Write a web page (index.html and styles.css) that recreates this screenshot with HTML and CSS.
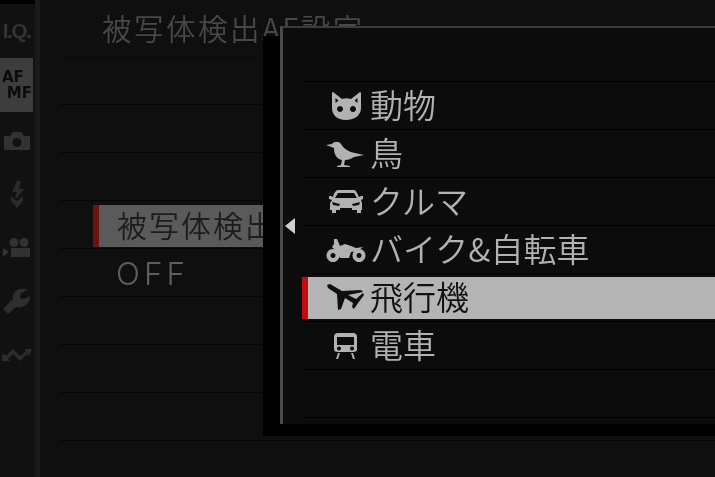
FILE: index.html
```html
<!DOCTYPE html>
<html lang="ja">
<head>
<meta charset="utf-8">
<title>被写体検出AF設定</title>
<link rel="stylesheet" href="styles.css">
</head>
<body>
<div class="screen">
  <aside class="side">
    <div class="side-top"></div>
    <div class="tab tab-iq">I.Q.</div>
    <div class="tab tab-af"><span class="af">AF</span><span class="mf">MF</span></div>
    <div class="tab tab-ic">
      <svg class="s-ic" viewBox="0 0 28 20"><path fill-rule="evenodd" d="M1 5h6l3-4h8l3 4h6v14H1zM14 7a4.500 4.500 0 1 0 .01 0z"/></svg>
    </div>
    <div class="tab tab-ic">
      <svg class="s-ic s-flash" viewBox="0 0 16 27"><path d="M8 0h4L10 8h5L8 17H6l2-6H3z"/><path d="M2 15l6 5 6-5v5l-6 7-6-7z"/></svg>
    </div>
    <div class="tab tab-ic">
      <svg class="s-ic" viewBox="0 0 28 20"><circle cx="11" cy="4.500" r="4.500"/><circle cx="21" cy="4.500" r="4.500"/><path d="M8 10h19v9H8zM0 10l6 4-6 5z"/></svg>
    </div>
    <div class="tab tab-ic">
      <svg class="s-ic s-wrench" viewBox="0 0 27 25"><path d="M0 20L10 10C9 4 14-1 22 0l3 1-7 3-1 5 4 1 6-3c0 8-7 13-14 11L5 25z"/></svg>
    </div>
    <div class="tab tab-ic">
      <svg class="s-ic s-wave" viewBox="0 0 30 12"><path d="M0 5v7h8L6 10l5-5 7 7 7-7 2 2 3-7h-8l2 2-6 5-7-7-6 6z"/></svg>
    </div>
  </aside>
  <div class="stripe"></div>
  <main class="panel">
    <h1 class="title">被写体検出AF設定</h1>
    <div class="row"></div>
    <div class="row"></div>
    <div class="row"></div>
    <div class="row"><div class="sel-bar">被写体検出</div></div>
    <div class="row row-off">OFF</div>
    <div class="row"></div>
    <div class="row"></div>
    <div class="row"></div>
    <div class="row"></div>
  </main>
  <div class="popup">
    <div class="popup-inner">
      <div class="p-row"></div>
      <div class="p-row">
        <svg class="p-ic" viewBox="0 0 38 31"><path fill-rule="evenodd" d="M6 2l9 7c3-1 6-1 9 0l9-7c1 0 1 1 1 2v14c0 7-6 12-15 12S5 25 5 18V4c0-1 0-2 1-2zM8.500 8v5l3-2.500zM30.500 8l-3 2.500 3 2.500zM13 16a3 3 0 1 0 .01 0zM26 16a3 3 0 1 0 .01 0z"/></svg>
        <span>動物</span>
      </div>
      <div class="p-row">
        <svg class="p-ic" viewBox="0 0 38 31"><path d="M-1 7l6-1c2-3 7-3 9 0 3 5 8 8 14 9l9 2-10 2c-3 2-6 3-9 3l-1 5 6 1v1H10v-1l4-1 1-5c-5-1-8-5-8-12z"/></svg>
        <span>鳥</span>
      </div>
      <div class="p-row">
        <svg class="p-ic" viewBox="0 0 38 31"><path fill-rule="evenodd" d="M11 4h16c2 0 3 3 5 7l2-1h2v3l-2 1 1 3v7h-1v3h-4v-3H9v3H5v-3H3v-7l2-3-3-1v-3h2l2 1c1-4 3-7 5-7zM11 7L8 12h22l-3-5zM5 16l1 3 6 1 1-2zM33 16l-8 2 1 2 6-1zM13 22v2h12v-2z"/></svg>
        <span>クルマ</span>
      </div>
      <div class="p-row">
        <svg class="p-ic" viewBox="0 0 38 31"><path d="M7 5h3l3 7 5-2 6 2 5 2 7-1-5 4-7 1-2 6h-9l-3-6-5-5 2-3z"/><path fill-rule="evenodd" d="M6 15a6.500 6.500 0 1 1-.01 0zM6 19a2.500 2.500 0 1 0 .01 0zM32 15a6.500 6.500 0 1 1-.01 0zM32 19a2.500 2.500 0 1 0 .01 0z"/></svg>
        <span>バイク&amp;自転車</span>
      </div>
      <div class="p-row p-row-sel">
        <div class="p-sel">
          <svg class="p-ic" viewBox="0 0 38 31"><path d="M0 3l3-1 12 7 19-1 2 2-15 3 8 4 7-6 1 2-6 8-4 6-2-2 1-4-8-5-4 11-3 1-1-16-9-6z"/></svg>
          <span>飛行機</span>
        </div>
      </div>
      <div class="p-row">
        <svg class="p-ic" viewBox="0 0 38 31"><path fill-rule="evenodd" d="M11 3h15c3 0 4 2 4 4v12c0 2-1 3-4 3H11c-3 0-4-1-4-3V7c0-2 1-4 4-4zM10 7v8h17V7zM12 16.500a2 2 0 1 0 .01 0zM25 16.500a2 2 0 1 0 .01 0zM11 23h2l-2 6H9zM24 23h2l2 6h-2z"/></svg>
        <span>電車</span>
      </div>
      <div class="p-row"></div>
    </div>
    <span class="arrow"></span>
  </div>
</div>
</body>
</html>
```
FILE: styles.css
```css
html, body { margin: 0; padding: 0; background: #0f0f0f; }
.screen {
  width: 715px; height: 477px; position: relative; overflow: hidden;
  display: flex; background: #0f0f0f; filter: blur(.45px);
  font-family: "Noto Sans CJK JP", "Liberation Sans", sans-serif;
}
.side { width: 35px; flex: none; background: #111; display: flex; flex-direction: column; }
.side-top { height: 4px; width: 35px; background: #000; }
.tab { width: 33px; display: flex; align-items: center; justify-content: center; }
.tab-iq {
  height: 54px;
  font: 700 21px "Liberation Sans", sans-serif; letter-spacing: -1.6px; color: #343434;
}
.tab-af {
  height: 54px; margin-bottom: 2px; background: #3d3d3d; flex-direction: column; align-items: stretch;
  font: 700 15px/16px "DejaVu Sans", sans-serif; color: #0c0c0c;
}
.af { padding-left: 2px; }
.mf { align-self: flex-end; padding-right: 1px; }
.tab-ic { height: 53.5px; }
.s-ic { width: 28px; height: 20px; fill: #323232; overflow: visible; }
.s-flash { width: 16px; height: 27px; fill: #2a2a2a; }
.s-wrench { width: 27px; height: 25px; fill: #2e2e2e; }
.s-wave { width: 30px; height: 12px; fill: #2c2c2c; }
.stripe { width: 5px; flex: none; background: #1a1a1a; }
.panel { margin-left: 20px; flex: 1; min-width: 0; }
.title {
  margin: 0 0 0 42px; height: 56px; white-space: nowrap;
  font-weight: 350; font-size: 29.500px; line-height: 55px; letter-spacing: 2.500px; color: #484848;
}
.row { height: 47px; border-top: 1px solid #060606; }
.title + .row { border-top-color: #0b0b0b; }
.sel-bar {
  margin: 4px 0 0 33px; height: 42px; box-sizing: border-box;
  border-left: 6px solid #6b1410; background: #5a5a5a; color: #1c1c1c;
  padding-left: 18px; font-size: 30px; font-weight: 350; line-height: 39px; letter-spacing: 2px; white-space: nowrap;
}
.row-off {
  padding-left: 56px; font: 300 31.500px/50px Inter, "Open Sans", sans-serif; letter-spacing: 4px; color: #5e5e5e;
  overflow: hidden;
}
.popup {
  position: absolute; left: 263px; top: 36px; width: 452px; height: 400px;
  background: #000;
}
.arrow {
  position: absolute; left: 22px; top: 182px; width: 0; height: 0;
  border-style: solid; border-width: 8.500px 10px 8.500px 0;
  border-color: transparent #d0d0d0 transparent transparent;
}
.popup-inner {
  position: absolute; left: 17px; top: -10px; right: 0; bottom: 12px;
  box-sizing: border-box; padding: 6px 0 0 19px;
  border-left: 3px solid #4a4a4a; border-top: 2px solid #3c3c3c;
  background: #0c0c0c;
}
.p-row {
  height: 47px; border-bottom: 1px solid #000;
  display: flex; align-items: center; padding-left: 25px;
  font-size: 33px; font-weight: 350; color: #b2b2b2; white-space: nowrap;
}
.p-row span { margin: 0 0 4px 5px; }
.p-ic { width: 38px; height: 31px; fill: #b2b2b2; flex: none; overflow: visible; }
.p-row-sel { padding-left: 0; }
.p-sel {
  flex: 1; height: 42px; align-self: flex-start; margin-top: 3px; box-sizing: border-box;
  border-left: 6px solid #c00d12; background: #b4b4b4; color: #111;
  display: flex; align-items: center; padding: 0 0 1px 19px;
}
.p-sel .p-ic { fill: #0f0f0f; }
```
